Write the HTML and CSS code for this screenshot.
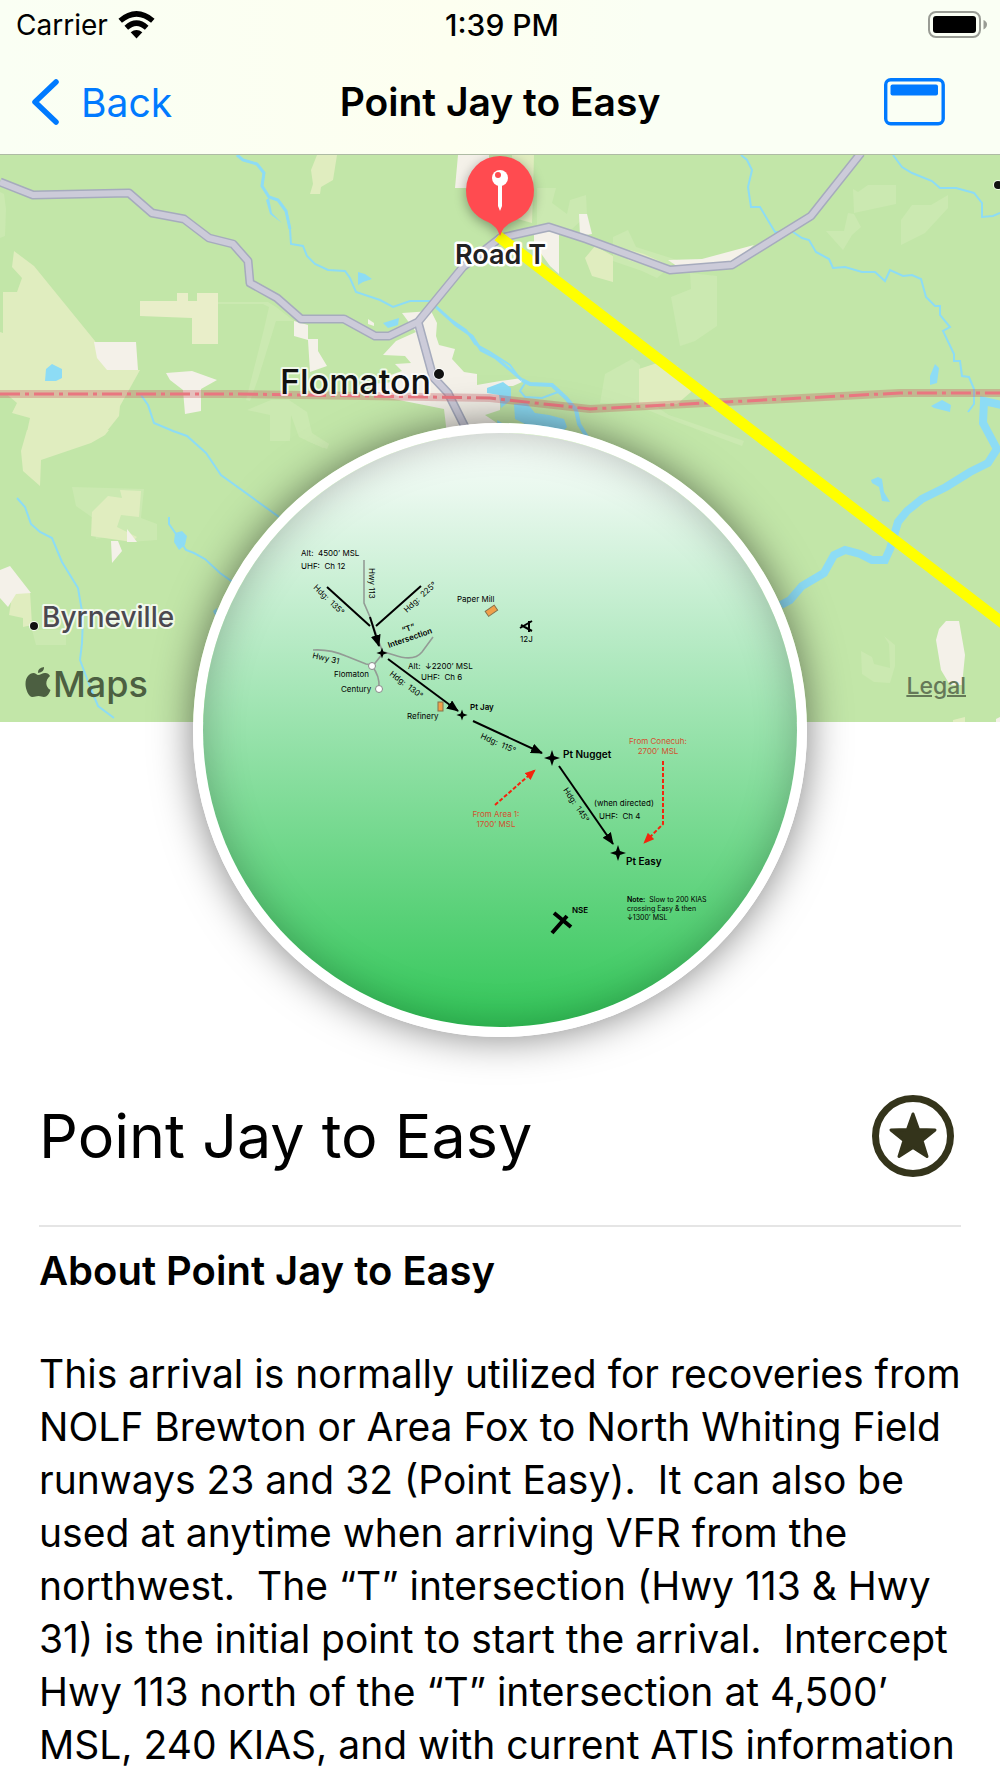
FILE: index.html
```html
<!DOCTYPE html>
<html lang="en">
<head>
<meta charset="utf-8">
<meta name="viewport" content="width=device-width, initial-scale=1">
<title>Point Jay to Easy</title>
<link rel="stylesheet" href="styles.css">
</head>
<body>
<header class="top">
  <div class="status">
    <span class="carrier">Carrier
      <svg class="wifi" viewBox="0 0 37 28" aria-hidden="true">
        <path d="M18.500 27.500 L12.700 21.300 Q18.500 16.700 24.300 21.300 Z" fill="#000"/>
        <path d="M8.300 16.700 Q18.500 7.500 28.700 16.700" fill="none" stroke="#000" stroke-width="5.400"/>
        <path d="M2.200 9.700 Q18.500 -4 34.800 9.700" fill="none" stroke="#000" stroke-width="5.400"/>
      </svg>
    </span>
    <span class="clock">1:39 PM</span>
    <svg class="battery" viewBox="0 0 60 28" aria-label="Battery full">
      <rect x="1" y="1" width="51" height="25" rx="7" fill="none" stroke="#999c94" stroke-width="2"/>
      <rect x="5" y="5" width="43" height="17" rx="3" fill="#000"/>
      <path d="M55.500 9 Q59 10.500 59 13.500 Q59 16.500 55.500 18.500 Z" fill="#999c94"/>
    </svg>
  </div>
  <nav class="nav">
    <a class="back" href="#">
      <svg class="chevron" viewBox="0 0 28 46" aria-hidden="true"><path d="M25 3 L4 23 L25 43" fill="none" stroke="#007aff" stroke-width="5.500" stroke-linecap="round" stroke-linejoin="round"/></svg>
      Back
    </a>
    <h2 class="nav-title">Point Jay to Easy</h2>
    <button class="panel" type="button" aria-label="Show card">
      <svg viewBox="0 0 61 48" aria-hidden="true"><rect x="1.700" y="1.700" width="57.500" height="44" rx="5" fill="none" stroke="#007aff" stroke-width="3.400"/><rect x="6.500" y="6.500" width="47.500" height="11" rx="2" fill="#007aff"/></svg>
    </button>
  </nav>
</header>
<main>
  <section class="map" aria-label="Map">
    <svg class="map-art" viewBox="0 155 1000 567" preserveAspectRatio="xMidYMin slice">
      <rect x="0" y="155" width="1000" height="567" fill="#c2e6a8"/>
      <g fill="#cbe9b1">
        <path d="M0 192l4 2 2 15-1 27-5 2zM218 302h50l8 5 18 14h-18l-18 58-8 22-4-1 18-71 5-22-6-3h-45zM247 410l24-10h18l18 12 5 21 17 11-6 4-24-11-8-22-1 26h-20v-26zM537 188h19l-4 15 15 11 3-14 16-5 1 20-15 14-35 2z"/>
        <path d="M613 237l15-7 8 17 41 13-20 18-15-7-29-10zM690 273l27 3v50l-22 15-15 5-9-49 20-8zM853 189l5 3 10-7h28v19l-42 9zM848 213l6 1 7 13-9 8-9 15-17-19h18zM901 220l11-15h19l17-10v13l-23 25-24 12zM605 374l27-15 8 6v38h-40zM639 402l15 3 15 10 75 26-2 5-65-24-44-18z"/>
        <path d="M72 487l72 2-3 29 16 6v16l-26 2-19-6-16 3-3-21-17-12zM32 630h34v15H36zM270 425h20v13h-20zM298 427l31 17-2 5-20-8zM861 651l11 6 2 7 16 4-1-24-5-8 11 9v21l-5 17-16-1-12-8z"/>
      </g>
      <g fill="#e0edbf">
        <path d="M14 251l20 15 61 75 12 28 33 1-20 36-1 10-16 20-15 5H25l5-23-18-5 5-10-14-12V292h14l5-14-10-11zM0 332l12 4 2 8 20 4v22l51 5v8l-33 5-10 7H0z"/>
        <path d="M317 155h20l-4 25-12 7-1 7h-10l3-10-2-14zM512 155h22l-1 38-1 30-18-5zM27 430h82l-4 5-14 8-50 17-1 26-17-15-2-20zM92 512l16-16 14 2-2-8 21 1-2 26-18-2-4 12 20 10-5 5-41-6zM13 590l17 2 2 33-9 2v-9l-14-3zM639 369l18-6 20 3 14 26-14 12h-38zM953 720l12-3v5h-12z"/>
        <path d="M585 258l10-12 18 10v26l-21-6zM630 250l14 4 22 10-10 4-28-8z"/>
      </g>
      <path fill="#e9eec9" d="M140 301h37v-8h11v8h9v-8h21v51h-26v-26l-52-2z"/>
      <g fill="#f4f1e9">
        <path d="M94 342h42l2 28h-31l-10-12zM166 373l26-2 25 9-16 9v22l-16 3-2-24-13-10zM294 321l14 4v14h10v12l9 15-17 6-2-32-14-4zM458 155h31v33h-34zM534 232h25v42l-9-8-10-14-6-8zM579 214h8l5 20-12 2zM668 260l34-1 52-14-21 18-49 8z"/>
        <path d="M402 313l29-2 6 12-1 13 3 9 16 4-3 10 12 13 13 2v11l23-4v29l-15 5 15 10v10l-52 8-4-34-70-14-4-11 25-2-7-6 14-5-7-7 16-1-6-7-22-1 13-14 20-9zM368 319l6 4v3l-6-2zM500 381l22-3v4l-9 4h-13zM0 570l10-4 21 27-15 1-8 13-8-9zM127 529l10 13-10 0zM111 541h7l4 10-10 12zM946 621h13l6 34-3 30h-12l-9-15-5-30 3-11zM996 719l4-2v5h-4z"/>
      </g>
      <g fill="#8ddcf5">
        <path d="M46 369l6-5 10 5v9l-6 3H45zM358 272l7 2 7 5-9 3-5 3zM383 323l16-5-1 7-10 3zM487 388l16-6 8 6v12l-10 8-2-13-12-2zM514 404l13-1 8 10 14 2 15 4 3 8-6 7-30-7-16-8zM497 420l5 3-4 5zM266 200l3-2 3 15 10 10-12-9zM935 364l4 4-2 15-7 2v-9zM931 406l11-6 9 5-1 7-16-4zM871 480l7-3 4 2 2 13 6 10-8-1-3-14-7-4zM175 533l7-2 5 5-2 9-6 5-5-8zM213 611l4-3-1 9z"/>
      </g>
      <g fill="none" stroke="#8ddcf5">
        <path d="M237 155l6 5 14 4 7 9-2 13 7 11 9 3 8 11 4 18 1 15 12 2 4 10 8 8 13 6 17 1 5 7 6 14 24 8 13 7 17-6h20l20 18 16 11 9 14 15 8 20 13 8 11" stroke-width="2"/>
        <path d="M237 155l6 5 14 4 7 9-2 13 7 11 9 3 8 11 4 18M436 307l20 18 16 11 9 14 15 8 26 22" stroke-width="3"/>
        <path d="M522 380l8 4 22 1 14 13 10 12 3 14 8 13" stroke-width="4"/>
        <path d="M525 383l-5 8 5 6 17 1 16-6M141 395l7 10 6 18 19 8 14 5 19 17 15 22 58 42M17 498l8 9 6 17 9 8 12 6 10 24 16 26 5 29-1 26-2 17 9 24 9 22 16 12M169 517v7l7 10 10 16 8 3 11 6 15 14 14 10" stroke-width="2"/>
        <path d="M741 155l6 5 5 10-4 17 3 20h9l15 25h18l9 6 7 2 7 12 13 7 4 9 12-1 17 5h13l10 9 5-11 13 6 9-1 9 4 5 18 9 9h5v9l10 12-7 4 11 23v7h6l2 15 7 1 5 12v15l-6 8M893 155l9 12 10 6 20 8 8 7h16l18 5 8 10v14l11-1 7-3" stroke-width="2"/>
      </g>
      <path d="M781 605l9-5 12-14 22-13 10-18 11-5 15 4 12 6h13l5-11 8-27 9-11 15-12 24-12 24-15 18-9 9-14-14-26 1-22 18 4 12 14" fill="none" stroke="#8ddcf5" stroke-width="8"/>
      <g fill="none" stroke-linejoin="round">
        <path d="M0 182L33 195L129 193L152 213L184 219L209 238L233 244L248 261L250 283L277 298L301 319H344L375 336H389L418 322L463 267L500 238L549 227L586 239L670 270L732 265L811 216L861 153M418 322L433 377L448 393L465 427" stroke="#a6abbd" stroke-width="9"/>
        <path d="M0 182L33 195L129 193L152 213L184 219L209 238L233 244L248 261L250 283L277 298L301 319H344L375 336H389L418 322L463 267L500 238L549 227L586 239L670 270L732 265L811 216L861 153M418 322L433 377L448 393L465 427" stroke="#cccbd9" stroke-width="6"/>
        <path d="M0 394h240l250 4 100 11 310-16h100" stroke="#c2515b" stroke-opacity=".3" stroke-width="8"/>
        <path d="M0 394h240l250 4 100 11 310-16h100" stroke="#e97680" stroke-width="3" stroke-dasharray="20 5 4 5"/>
      </g>
      <path d="M498 236L1004 624" stroke="#ff0" stroke-width="11"/>
      <g stroke="#fff" stroke-opacity=".8" paint-order="stroke" stroke-linejoin="round">
        <text x="280" y="394" class="city">Flomaton</text>
        <text x="42" y="627" class="town">Byrneville</text>
        <circle cx="439" cy="374" r="5" fill="#111" stroke-width="2"/>
        <circle cx="34" cy="626" r="4" fill="#111" stroke-width="2"/>
        <circle cx="998" cy="185" r="4" fill="#111" stroke-width="2"/>
        <text x="455" y="264" class="pin-name">Road T</text>
      </g>
      <path class="pin" d="M500 236Q497 226 488 222Q466 213 466 190A34 34 0 1 1 534 190Q534 213 512 222Q503 226 500 236Z" fill="#ff4b50"/>
      <circle cx="500" cy="178" r="8" fill="#fff"/><circle cx="498" cy="175" r="3" fill="#ff4b50"/>
      <path d="M498 184h4v22l-2 5-2-5z" fill="#fff"/>
      <g fill="#4c5f41">
        <path d="M38 675C40.500 675 43 672.500 45.500 673C47.500 673 49 674 50 676C45 680 45 687 50.500 690C49 694 47 697 44 697C42 697 41 696 38.500 696C36 696 35 697 32.500 697C28.500 697 25.500 689 25.500 684C25.500 677 29.500 673 33.500 673C35.500 673 37 675 38 675Z"/>
        <path d="M38 673Q37.500 668 44 667Q44.500 672 38 673Z"/>
        <text x="53" y="697" class="brand">Maps</text>
      </g>
    </svg>
    <a class="legal" href="#">Legal</a>
  </section>

  <figure class="chart">
    <svg viewBox="203 433 594 594" role="img" aria-label="Arrival diagram">
      <defs>
        <linearGradient id="sky" x1="0" y1="0" x2="0" y2="1"><stop offset="0" stop-color="#f6fcf8"/><stop offset=".1" stop-color="#e9f8ee"/><stop offset="1" stop-color="#33c759"/></linearGradient>
        <marker id="head" viewBox="0 0 12 10" refX="11" refY="5" markerWidth="12" markerHeight="10" markerUnits="userSpaceOnUse" orient="auto"><path d="M0 0L12 5L0 10Z"/></marker>
        <marker id="redhead" viewBox="0 0 12 10" refX="11" refY="5" markerWidth="11" markerHeight="9" markerUnits="userSpaceOnUse" orient="auto"><path d="M0 0L12 5L0 10Z" fill="#f3250d"/></marker>
        <path id="fix" d="M0-8L2-2L8 0L2 2L0 8L-2 2L-8 0L-2-2Z"/>
      </defs>
      <rect x="203" y="433" width="594" height="594" fill="url(#sky)"/>
      <g fill="none" stroke="#939b95" stroke-width="1.600">
        <path d="M364 560v43l6 14 13 36-11 14M313 650q17-1 33 6l20 8 6 1M372 666q8 10 7 22M384 652l10 3q20 7 28-3l11-15"/>
      </g>
      <g fill="none" stroke="#000" stroke-width="2">
        <path d="M327 587L370 626M421 586L376 626"/>
        <path d="M370 617L379 646" marker-end="url(#head)"/><path d="M388 659L458 711" marker-end="url(#head)"/>
        <path d="M473 721L542 753" marker-end="url(#head)"/><path d="M559 766L613 844" marker-end="url(#head)"/>
      </g>
      <use href="#fix" transform="translate(382 653) scale(.7)"/><use href="#fix" transform="translate(462 715) scale(.7)"/>
      <use href="#fix" transform="translate(552 758)"/><use href="#fix" transform="translate(618 853)"/>
      <g fill="#fff" stroke="#888"><circle cx="372" cy="666" r="3.500"/><circle cx="379" cy="689" r="3.500"/></g>
      <g fill="#f0a04a" stroke="#85714b"><rect x="486" y="608" width="11" height="6" transform="rotate(-35 491 611)"/><rect x="438" y="702" width="5" height="9"/></g>
      <g fill="none" stroke="#f3250d" stroke-width="2" stroke-dasharray="4 2">
        <path d="M495 805L535 770" marker-end="url(#redhead)"/><path d="M663 761v63L644 843" marker-end="url(#redhead)"/>
      </g>
      <path d="M520 628L532 621M521 625L532 631M529 621v11" fill="none" stroke="#000" stroke-width="2"/>
      <path d="M552 933L567 916M554 913L571 927" stroke="#000" stroke-width="4"/>
      <g class="note">
        <text x="301" y="556">Alt:&#160; 4500’ MSL</text><text x="301" y="569">UHF:&#160; Ch 12</text>
        <text transform="translate(369 568) rotate(90)">Hwy 113</text>
        <text transform="translate(313 588) rotate(44)">Hdg:&#160; 135°</text>
        <text transform="translate(407 613) rotate(-43)">Hdg:&#160; 225°</text>
        <text transform="translate(389 648) rotate(-19)" class="heavy">Intersection</text>
        <text transform="translate(403 633) rotate(-19)" class="heavy">“T”</text>
        <text transform="translate(312 658) rotate(13)">Hwy 31</text>
        <text x="334" y="677">Flomaton</text><text x="341" y="692">Century</text><text x="407" y="719">Refinery</text>
        <text x="457" y="602">Paper Mill</text><text x="520" y="642">12J</text>
        <text x="408" y="669">Alt:&#160; ↓2200’ MSL</text><text x="421" y="680">UHF:&#160; Ch 6</text>
        <text transform="translate(389 675) rotate(37)">Hdg:&#160; 130°</text>
        <text transform="translate(480 738) rotate(24)">Hdg:&#160; 115°</text>
        <text transform="translate(563 790) rotate(56)">Hdg:&#160; 145°</text>
        <text x="594" y="806">(when directed)</text><text x="599" y="819">UHF:&#160; Ch 4</text>
        <text x="470" y="710" class="heavy">Pt Jay</text><text x="572" y="913" class="heavy">NSE</text>
      </g>
      <g class="fixname"><text x="563" y="758">Pt Nugget</text><text x="626" y="865">Pt Easy</text></g>
      <g class="note red"><text x="658" y="744">From Conecuh:</text><text x="658" y="754">2700’ MSL</text><text x="496" y="817">From Area 1:</text><text x="496" y="827">1700’ MSL</text></g>
      <g class="small"><text x="627" y="902"><tspan class="heavy">Note:</tspan>&#160; Slow to 200 KIAS</text><text x="627" y="911">crossing Easy &amp; then</text><text x="627" y="920">↓1300’ MSL</text></g>
    </svg>
  </figure>

  <article class="details">
    <div class="heading">
      <h1>Point Jay to Easy</h1>
      <button class="star" type="button" aria-label="Favorite">
        <svg viewBox="0 0 82 82" aria-hidden="true"><circle cx="41" cy="41" r="37.500" fill="none" stroke="#34341b" stroke-width="7"/><path d="M41 19l5.500 15.500 16.500.5-13 10.500 5 16L41 52.500 27 61.500l5-16L19 35l16.500-.5z" fill="#34341b" stroke="#34341b" stroke-width="3" stroke-linejoin="round"/></svg>
      </button>
    </div>
    <h3>About Point Jay to Easy</h3>
    <p>This arrival is normally utilized for recoveries from NOLF Brewton or Area Fox to North Whiting Field runways 23 and 32 (Point Easy).&#160; It can also be used at anytime when arriving VFR from the northwest.&#160; The “T” intersection (Hwy 113 &amp; Hwy 31) is the initial point to start the arrival.&#160; Intercept Hwy 113 north of the “T” intersection at 4,500’ MSL, 240 KIAS, and with current ATIS information</p>
  </article>
</main>
</body>
</html>
```
FILE: styles.css
```css
* { box-sizing: border-box; }
body { margin: 0; background: #fff; color: #000; font-family: Inter, "Liberation Sans", sans-serif; }
h1, h2, h3, p, figure { margin: 0; }
svg { display: block; }
button { border: 0; padding: 0; background: none; }

.top { background: linear-gradient(90deg, #fafff4, #fdfff0 45%, #fafff4 65%); border-bottom: 1px solid #aebba4; }
.status { display: grid; grid-template-columns: 1fr auto 1fr; align-items: center; height: 50px; padding: 0 12px 0 16px; font-size: 28px; }
.carrier { display: flex; align-items: center; gap: 10px; }
.wifi { width: 37px; height: 28px; }
.clock { font-size: 30px; font-weight: 500; }
.battery { width: 60px; height: 28px; justify-self: end; }
.nav { display: grid; grid-template-columns: 1fr auto 1fr; align-items: center; height: 104px; }
.back { display: flex; align-items: center; gap: 22px; padding-left: 31px; color: #007aff; font-size: 39px; text-decoration: none; }
.chevron { width: 28px; height: 46px; }
.nav-title { font-size: 39px; line-height: 52px; font-weight: 600; }
.panel { justify-self: end; width: 61px; height: 48px; margin-right: 55px; }

.map { position: relative; }
.map-art { width: 100%; height: 567px; }
.city { font-size: 34px; font-weight: 500; fill: #111; stroke-width: 4px; }
.town { font-size: 28px; font-weight: 500; fill: #4b4850; stroke-width: 4px; }
.pin-name { font-size: 27px; font-weight: 600; fill: #222; stroke-width: 5px; stroke-opacity: 1; }
.pin { filter: drop-shadow(0 3px 6px rgba(0, 0, 0, .35)); }
.brand { font-size: 36px; font-weight: 500; }
.legal { position: absolute; right: 34px; bottom: 22px; color: #657858; font-size: 23px; font-weight: 500; text-decoration-thickness: 2px; }

.chart { position: relative; width: 614px; margin: -299px auto 0; border: 10px solid #fff; border-radius: 50%; overflow: hidden; box-shadow: 0 0 40px rgba(0, 0, 0, .5); }
.chart::after { content: ""; position: absolute; inset: 0; border-radius: 50%; box-shadow: inset 0 0 40px rgba(0, 0, 0, .25); }
.chart svg { width: 100%; height: auto; }
.note { font-size: 8px; }
.fixname { font-size: 10px; font-weight: 600; }
.small { font-size: 7px; }
.heavy { font-weight: 600; }
.red { fill: #d4502f; text-anchor: middle; }

.details { padding: 58px 24px 0 39px; }
.heading { display: flex; justify-content: space-between; align-items: center; margin-right: 15px; padding: 0 7px 48px 0; border-bottom: 2px solid #e5e5e5; }
h1 { font-size: 61px; line-height: 82px; font-weight: 400; }
.star { width: 82px; height: 82px; }
h3 { padding: 17px 0 50px; font-size: 40px; line-height: 53px; font-weight: 600; }
p { font-size: 39px; line-height: 53px; }
```
